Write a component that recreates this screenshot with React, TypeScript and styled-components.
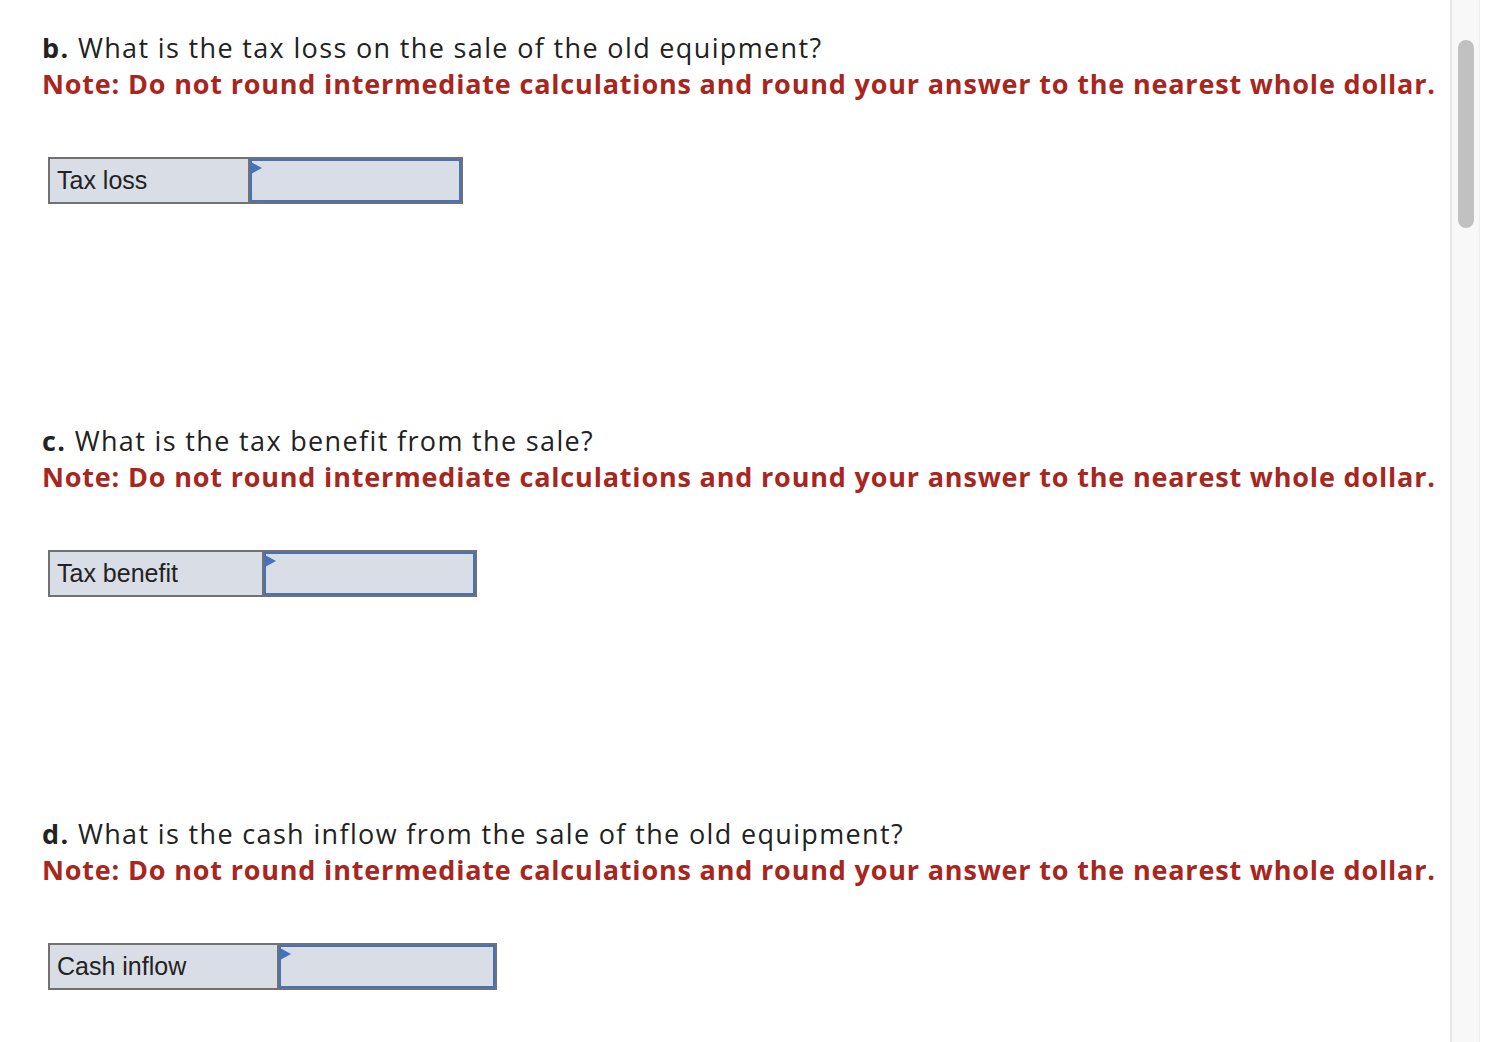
import React from "react";
import styled, { createGlobalStyle } from "styled-components";

const Global = createGlobalStyle`
  html, body { margin: 0; padding: 0; background: #ffffff; }
  body { font-family: "Open Sans", Lato, sans-serif; }
`;

const Page = styled.div`
  display: flex;
  width: 1510px;
  height: 1042px;
  overflow: hidden;
  background: #ffffff;
`;

const Main = styled.main`
  width: 1450px;
  box-sizing: border-box;
  padding: 30px 0 0 42px;
  display: flex;
  flex-direction: column;
  gap: 219px;
`;

const Track = styled.div`
  width: 30px;
  box-sizing: border-box;
  background: #f8f8f8;
  border-left: 2px solid #e6e6e6;
  border-right: 1px solid #eeeeee;
  display: flex;
  justify-content: center;
`;

const Thumb = styled.div`
  margin-top: 40px;
  width: 16px;
  height: 188px;
  border-radius: 8px;
  background: #c1c1c1;
`;

const Section = styled.section`
  display: flex;
  flex-direction: column;
`;

const Question = styled.p`
  margin: 0;
  font-size: 27px;
  line-height: 35px;
  letter-spacing: 1.35px;
  color: #222222;
  white-space: nowrap;
  b { font-weight: 700; }
`;

const Note = styled.p`
  margin: 1px 0 0;
  font-size: 27px;
  line-height: 35px;
  letter-spacing: 0.82px;
  font-weight: 700;
  color: #a7261e;
  white-space: nowrap;
`;

const Table = styled.div`
  margin: 56px 0 0 6px;
  display: flex;
  align-self: flex-start;
  border: 2px solid #717171;
  background: #d9dde6;
  height: 47px;
  box-sizing: border-box;
`;

const Label = styled.div<{ $w: number }>`
  width: ${(p) => p.$w}px;
  box-sizing: border-box;
  padding-left: 7px;
  border-right: 2px solid #717171;
  display: flex;
  align-items: center;
  font-family: "Liberation Sans", Arial, sans-serif;
  font-size: 25px;
  color: #222222;
`;

const InputCell = styled.div<{ $w: number }>`
  position: relative;
  width: ${(p) => p.$w}px;
  box-sizing: border-box;
  border: 2px solid #4672bb;
`;

const Flag = styled.svg`
  position: absolute;
  left: -1px;
  top: 1px;
`;

const items = [
  {
    letter: "b.",
    q: "What is the tax loss on the sale of the old equipment?",
    label: "Tax loss",
    w: 200,
    iw: 211,
  },
  {
    letter: "c.",
    q: "What is the tax benefit from the sale?",
    label: "Tax benefit",
    w: 214,
    iw: 211,
  },
  {
    letter: "d.",
    q: "What is the cash inflow from the sale of the old equipment?",
    label: "Cash inflow",
    w: 229,
    iw: 216,
  },
];

export default function App() {
  return (
    <>
      <Global />
      <Page>
        <Main>
          {items.map((it) => (
            <Section key={it.letter}>
              <Question>
                <b>{it.letter}</b> {it.q}
              </Question>
              <Note>
                Note: Do not round intermediate calculations and round your answer to the nearest whole dollar.
              </Note>
              <Table>
                <Label $w={it.w}>{it.label}</Label>
                <InputCell $w={it.iw}>
                  <Flag width="11" height="12" viewBox="0 0 11 12">
                    <polygon points="0,0 11,6 0,12" fill="#4672bb" />
                  </Flag>
                </InputCell>
              </Table>
            </Section>
          ))}
        </Main>
        <Track>
          <Thumb />
        </Track>
      </Page>
    </>
  );
}
